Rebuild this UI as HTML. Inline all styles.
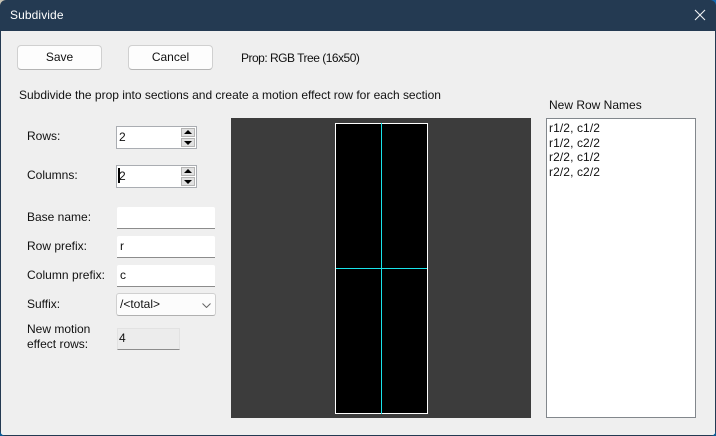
<!DOCTYPE html>
<html><head><meta charset="utf-8">
<style>
html,body{margin:0;padding:0;width:716px;height:436px;overflow:hidden;background:#efefef}
body{font-family:"Liberation Sans",sans-serif;font-size:12px;color:#111;position:relative}
div,span{position:absolute;box-sizing:border-box}
svg{position:absolute}
.t{white-space:nowrap;line-height:15px}
.btn{background:#fdfdfd;border:1px solid #d0d0d0;border-bottom-color:#b4b4b4;border-radius:4px;text-align:center;line-height:23px;width:85px;height:25px;top:45px}
.in{background:#fff;border-bottom:1px solid #8c8c8c;border-radius:2px 2px 0 0;height:22px;left:117px;width:98px;line-height:20px;padding-left:3px}
.spin{left:116px;width:81px;height:23px;background:#fff;border:1px solid #aaadb2}
.sb{left:64px;width:14px;height:9px;background:#e1e1e1;border:1px solid #b4b4b4}
.up{left:2px;top:1px;width:0;height:0;border-left:4px solid transparent;border-right:4px solid transparent;border-bottom:4px solid #000}
.dn{left:2px;top:2px;width:0;height:0;border-left:4px solid transparent;border-right:4px solid transparent;border-top:4px solid #000}
</style></head>
<body>
<div style="left:0;top:0;width:716px;height:31px;background:#243a52"></div>
<div style="left:0;top:31px;width:1px;height:405px;background:#243a52"></div>
<div style="left:0;top:435px;width:716px;height:1px;background:#243a52"></div>
<div style="left:715px;top:31px;width:1px;height:405px;background:#243a52"></div>
<svg style="left:0;top:0" width="6" height="6" viewBox="0 0 6 6"><path d="M0 0H6A6 6 0 0 0 0 6Z" fill="#c9c4b4"/></svg>
<svg style="left:710px;top:0" width="6" height="6" viewBox="0 0 6 6"><path d="M6 0H0A6 6 0 0 1 6 6Z" fill="#1268b0"/></svg>
<svg style="left:710px;top:430px" width="6" height="6" viewBox="0 0 6 6"><path d="M6 6H0A6 6 0 0 0 6 0Z" fill="#0c5a94"/></svg>
<svg style="left:0;top:430px" width="6" height="6" viewBox="0 0 6 6"><path d="M0 6H6A6 6 0 0 1 0 0Z" fill="#0c5a94"/></svg>
<span class="t" style="left:10px;top:8px;color:#fff;letter-spacing:.1px">Subdivide</span>
<svg style="left:694px;top:9px" width="12" height="12" viewBox="0 0 12 12"><path d="M1 1L11 11M11 1L1 11" stroke="#f0f2f4" stroke-width="1.1" fill="none"/></svg>

<div class="btn" style="left:17px">Save</div>
<div class="btn" style="left:128px">Cancel</div>
<span class="t" style="left:241px;top:51px;letter-spacing:-.5px">Prop: RGB Tree (16x50)</span>
<span class="t" style="left:19px;top:88px;letter-spacing:-.01px">Subdivide the prop into sections and create a motion effect row for each section</span>

<span class="t" style="left:27px;top:129px">Rows:</span>
<div class="spin" style="top:126px"><span class="t" style="left:2px;top:3px">2</span>
 <div class="sb" style="top:1px"><div class="up"></div></div>
 <div class="sb" style="top:11px"><div class="dn"></div></div></div>
<span class="t" style="left:27px;top:168px">Columns:</span>
<div class="spin" style="top:165px"><span class="t" style="left:2px;top:3px">2</span>
 <div style="left:1px;top:2px;width:2px;height:15px;background:#000"></div>
 <div class="sb" style="top:1px"><div class="up"></div></div>
 <div class="sb" style="top:11px"><div class="dn"></div></div></div>

<span class="t" style="left:27px;top:210px">Base name:</span>
<div class="in" style="top:207px"></div>
<span class="t" style="left:27px;top:239px">Row prefix:</span>
<div class="in" style="top:236px">r</div>
<span class="t" style="left:27px;top:268px;letter-spacing:.05px">Column prefix:</span>
<div class="in" style="top:265px">c</div>
<span class="t" style="left:27px;top:297px">Suffix:</span>
<div style="left:116px;top:293px;width:100px;height:23px;background:#fcfcfc;border:1px solid #d0d0d0;border-bottom-color:#b0b0b0;border-radius:3px;line-height:21px;padding-left:3px">/&lt;total&gt;
<svg style="left:85px;top:9px" width="9" height="5" viewBox="0 0 9 5"><path d="M.5 .5L4.5 4.5L8.5 .5" stroke="#666" stroke-width="1" fill="none"/></svg></div>
<span class="t" style="left:27px;top:322px">New motion</span>
<span class="t" style="left:27px;top:337px">effect rows:</span>
<div style="left:117px;top:328px;width:63px;height:22px;background:#ececec;border:1px solid #e2e2e2;border-bottom-color:#8c8c8c;line-height:19px;padding-left:1px">4</div>

<div style="left:231px;top:118px;width:300px;height:300px;background:#3c3c3c"></div>
<div style="left:335px;top:123px;width:93px;height:291px;background:#000;border:1px solid #fff"></div>
<div style="left:381px;top:123px;width:1px;height:291px;background:#19e3ea"></div>
<div style="left:336px;top:268px;width:91px;height:1px;background:#19e3ea"></div>

<span class="t" style="left:549px;top:98px">New Row Names</span>
<div style="left:546px;top:118px;width:150px;height:300px;background:#fff;border:1px solid #82878c"></div>
<span class="t" style="left:549px;top:121px;letter-spacing:.1px">r1/2, c1/2</span>
<span class="t" style="left:549px;top:136px;letter-spacing:.1px">r1/2, c2/2</span>
<span class="t" style="left:549px;top:150px;letter-spacing:.1px">r2/2, c1/2</span>
<span class="t" style="left:549px;top:165px;letter-spacing:.1px">r2/2, c2/2</span>
</body></html>
